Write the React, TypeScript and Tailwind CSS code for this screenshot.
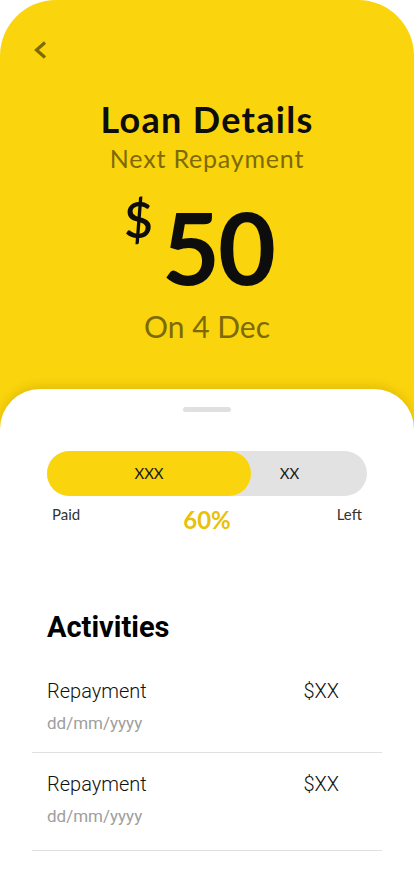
import React from "react";

const rows = [
  { title: "Repayment", date: "dd/mm/yyyy", amount: "$XX" },
  { title: "Repayment", date: "dd/mm/yyyy", amount: "$XX" },
];

export default function App() {
  return (
    <div className="w-[414px] h-[896px] bg-white overflow-hidden">
      <div className="h-[896px] bg-[#FAD40C] rounded-t-[56px] flex flex-col">
        {/* header */}
        <div className="pt-[40px] px-[32px] flex flex-col" style={{ fontFamily: "Lato, 'Noto Sans', sans-serif" }}>
          <button className="w-[16px] h-[20px] flex items-center justify-center">
            <svg width="16" height="20" viewBox="0 0 16 20" fill="none">
              <path d="M13 2.5 L4.5 10 L13 17.5" stroke="#7D6A06" strokeWidth="3.2" strokeLinecap="butt" strokeLinejoin="miter" />
            </svg>
          </button>
          <h1 className="mt-[39px] text-center text-[36px] leading-[40px] font-bold text-[#0d0d0d] tracking-[1.3px]">
            Loan Details
          </h1>
          <p className="mt-[4px] text-center text-[25px] leading-[30px] text-[#7D6A06] tracking-[0.8px]">
            Next Repayment
          </p>
          <div className="mt-[23px] pr-[16px] flex justify-center items-start text-[#0d0d0d]">
            <span className="text-[50px] leading-[50px] -mt-[2px] mr-[9px] font-semibold">$</span>
            <span className="text-[100px] leading-[100px] font-bold tracking-[-2px]">50</span>
          </div>
          <p className="mt-[12px] text-center text-[30px] leading-[36px] text-[#7D6A06]">
            On 4 Dec
          </p>
        </div>

        {/* sheet */}
        <div className="mt-[45px] flex-1 bg-white rounded-t-[40px] shadow-[0_-3px_10px_rgba(120,90,0,0.18)] flex flex-col">
          <div className="mt-[18px] mx-auto w-[48px] h-[5px] rounded-full bg-[#e0e0e0]" />

          <div className="mt-[39px] mx-[47px] h-[45px] rounded-full bg-[#e2e2e2] flex" style={{ fontFamily: "Lato, 'Noto Sans', sans-serif" }}>
            <div className="w-[204px] h-[45px] rounded-full bg-[#FAD40C] flex items-center justify-center text-[15px] text-[#1a1a1a]">
              XXX
            </div>
            <div className="flex-1 h-[45px] pr-[39px] flex items-center justify-center text-[15px] text-[#1a1a1a]">
              XX
            </div>
          </div>

          <div className="mt-[8px] px-[52px] grid grid-cols-3 items-start" style={{ fontFamily: "Lato, 'Noto Sans', sans-serif" }}>
            <span className="text-[15px] leading-[20px] text-[#333333]">Paid</span>
            <span className="mt-[2px] text-center text-[24px] leading-[28px] font-bold text-[#E8C10A]">60%</span>
            <span className="text-right text-[15px] leading-[20px] text-[#333333]">Left</span>
          </div>

          <div className="px-[32px]" style={{ fontFamily: "Roboto, 'Liberation Sans', sans-serif" }}>
            <h2 className="mt-[76px] pl-[15px] text-[29px] leading-[34px] font-bold text-black">Activities</h2>
            <div className="mt-[35px] flex flex-col">
              {rows.map((r, i) => (
                <div key={i} className={`border-b border-[#e0e0e0] ${i === 0 ? "pb-[18px]" : "pt-[19px] pb-[23px]"}`}>
                  <div className="pl-[15px] pr-[43px] flex justify-between">
                    <span className="text-[20px] leading-[24px] font-light text-[#111111]">{r.title}</span>
                    <span className="text-[20px] leading-[24px] font-light text-[#111111]">{r.amount}</span>
                  </div>
                  <div className="mt-[9px] pl-[15px] text-[17px] leading-[22px] text-[#9e9e9e]">{r.date}</div>
                </div>
              ))}
            </div>
          </div>
        </div>
      </div>
    </div>
  );
}
